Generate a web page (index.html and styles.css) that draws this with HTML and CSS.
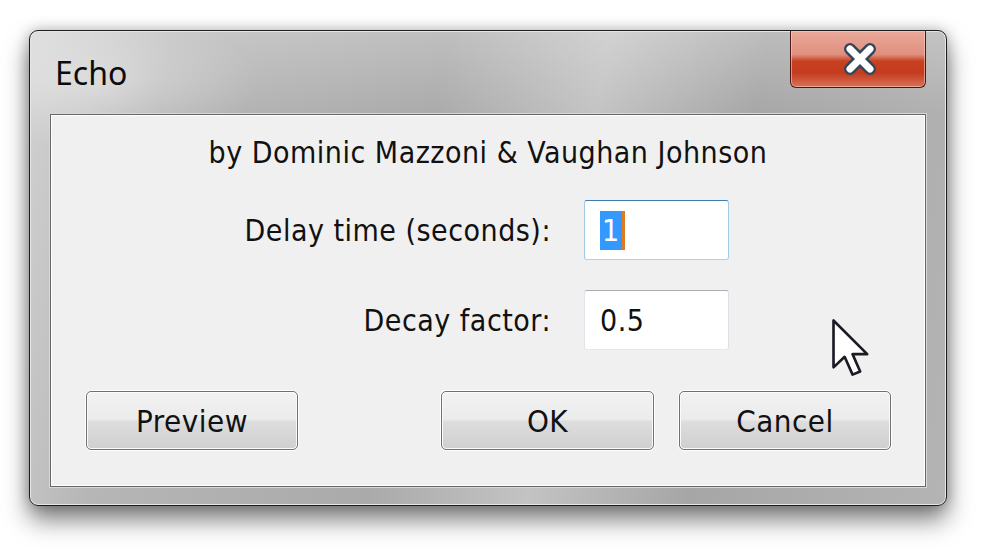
FILE: index.html
```html
<!DOCTYPE html>
<html lang="en">
<head>
    <meta charset="UTF-8">
    <meta name="viewport" content="width=device-width, initial-scale=1.0">
    <title>Echo</title>
    <link rel="stylesheet" href="styles.css">
</head>
<body>
    <div class="desktop">
        <div class="window">
            <div class="titlebar">
                <span class="title">Echo</span>
                <button class="close" aria-label="Close">
                    <svg width="38" height="34" viewBox="0 0 38 34">
                        <path d="M9 7 L29 27 M29 7 L9 27" stroke="#34465a" stroke-width="12" stroke-linecap="round"/>
                        <path d="M9 7 L29 27 M29 7 L9 27" stroke="#ffffff" stroke-width="7" stroke-linecap="round"/>
                    </svg>
                </button>
            </div>
            <div class="client">
                <p class="author">by Dominic Mazzoni &amp; Vaughan Johnson</p>
                <div class="fields">
                    <label for="delay">Delay time (seconds):</label>
                    <div class="field focused" id="delay"><span class="sel">1</span><span class="caret"></span></div>
                    <label for="decay">Decay factor:</label>
                    <div class="field" id="decay">0.5</div>
                </div>
                <div class="buttons">
                    <button class="btn">Preview</button>
                    <div class="btn-group">
                        <button class="btn">OK</button>
                        <button class="btn">Cancel</button>
                    </div>
                </div>
            </div>
        </div>
        <!-- mouse pointer sitting over the dialog -->
        <svg class="pointer" width="37" height="58" viewBox="0 0 12.6 19.8">
            <path d="M0.5 0.5 L0.5 16.5 L4.3 12.9 L7 19 L9.6 17.9 L7 12 L12 12 Z" fill="#ffffff" stroke="#1b1b25" stroke-width="0.9" stroke-linejoin="round"/>
        </svg>
    </div>
</body>
</html>
```

FILE: styles.css
```css
/* Windows 7 style dialog */
body {
    margin: 0;
    padding: 0;
    background-color: #FFFFFF;
    font-family: "DejaVu Sans Condensed", "DejaVu Sans", sans-serif;
    color: #111111;
}

.desktop {
    position: relative;
    width: 1000px;
    height: 560px;
    overflow: hidden;
    padding-top: 30px;
    box-sizing: border-box;
}

.window {
    display: flex;
    flex-direction: column;
    width: 918px;
    height: 476px;
    margin-left: 29px;
    box-sizing: border-box;
    border: 1px solid #1d1d1d;
    border-radius: 9px;
    background:
        radial-gradient(ellipse 160px 70px at 70px 50px, rgba(255, 255, 255, 0.35), rgba(255, 255, 255, 0)),
        linear-gradient(180deg, rgba(255, 255, 255, 0.25) 0%, rgba(255, 255, 255, 0) 18%),
        linear-gradient(100deg, #d2d2d2 0%, #b6b6b6 14%, #aaaaaa 42%, #c3c3c3 58%, #a6a6a6 74%, #b4b4b4 100%);
    box-shadow:
        inset 0 0 0 1px #e6e6e6,
        0 14px 24px rgba(0, 0, 0, 0.5),
        0 0 14px rgba(0, 0, 0, 0.25);
}

.titlebar {
    display: flex;
    align-items: center;
    justify-content: space-between;
    height: 83px;
    padding: 0 20px 0 25px;
}

.title {
    font-family: "Noto Sans", "Open Sans", sans-serif;
    font-size: 32px;
    color: #0c0c0c;
}

.close {
    align-self: flex-start;
    display: flex;
    align-items: center;
    justify-content: center;
    width: 136px;
    height: 57px;
    padding: 0 0 0 4px;
    border: 1px solid #4a1a12;
    border-top: none;
    border-radius: 0 0 6px 6px;
    background: linear-gradient(180deg, #eaa99b 0%, #e0907e 42%, #c8401f 54%, #c43b1f 75%, #d8735a 100%);
    box-shadow: inset 0 0 0 1px rgba(255, 210, 200, 0.55);
    cursor: pointer;
}

.client {
    display: flex;
    flex-direction: column;
    height: 373px;
    margin: 0 20px;
    box-sizing: border-box;
    border: 1px solid #666666;
    background: #F0F0F0;
    box-shadow: inset 0 0 0 1px #ffffff, 0 0 0 1px #d8d8d8;
}

.author {
    margin: 20px 0 0;
    line-height: 36px;
    text-align: center;
    font-size: 30px;
    letter-spacing: 0.5px;
}

.fields {
    display: grid;
    grid-template-columns: 500px 145px;
    column-gap: 33px;
    row-gap: 30px;
    margin-top: 29px;
    align-items: center;
}

label {
    text-align: right;
    font-size: 30px;
    letter-spacing: 0.5px;
}

.field {
    display: flex;
    align-items: center;
    height: 60px;
    box-sizing: border-box;
    padding-left: 15px;
    border: 1px solid;
    border-color: #abadb3 #dbdfe6 #e3e9ef #e2e3ea;
    border-radius: 3px;
    background: #FFFFFF;
    font-size: 30px;
    letter-spacing: 0.5px;
}

.field.focused {
    border-color: #3d7bad #a4c9e3 #b5cfe7 #a4c9e3;
}

.sel {
    display: flex;
    align-items: center;
    height: 39px;
    padding: 0 2px 0 2px;
    background: #3399FF;
    color: #FFFFFF;
}

.caret {
    width: 3px;
    height: 39px;
    background: #e07a22;
}

.buttons {
    display: flex;
    justify-content: space-between;
    margin-top: 41px;
    padding: 0 34px 0 35px;
}

.btn-group {
    display: flex;
    gap: 25px;
}

.btn {
    width: 212px;
    height: 59px;
    padding: 0;
    border: 1px solid #707070;
    border-radius: 5px;
    background: linear-gradient(180deg, #f2f2f2 0%, #ebebeb 48%, #dddddd 52%, #cfcfcf 100%);
    box-shadow: inset 0 0 0 1px #fbfbfb, 0 0 0 1px #ffffff;
    font-family: inherit;
    font-size: 31px;
    letter-spacing: 0.5px;
    color: #111111;
}

.btn-group .btn:first-child {
    width: 213px;
}

.pointer {
    position: absolute;
    left: 832px;
    top: 319px;
}
```
